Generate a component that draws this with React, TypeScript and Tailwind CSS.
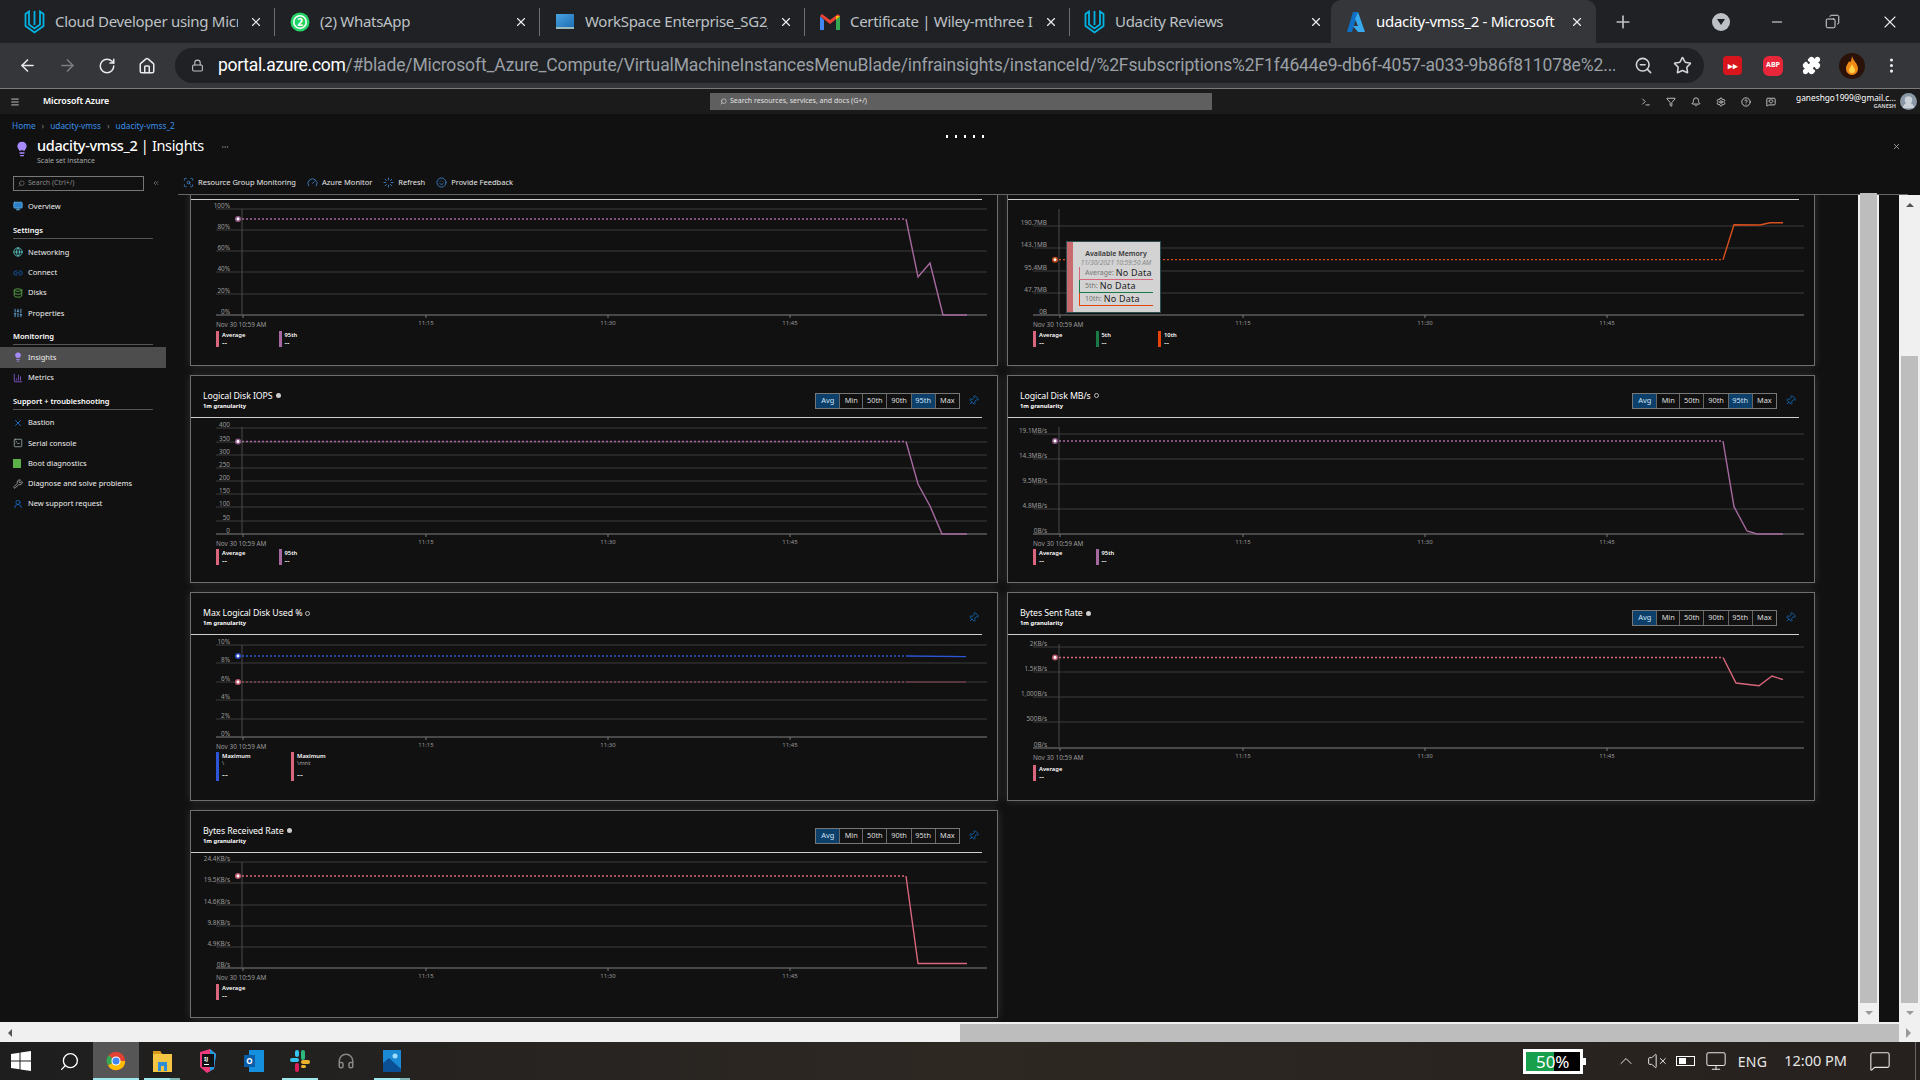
import React from "react";
import {
  ArrowLeft, ArrowRight, RotateCw, Home, Lock, ZoomOut, Star, Puzzle, EllipsisVertical, Minus, X, Plus, Copy, Search,
  Terminal, Filter, Bell, Settings, CircleHelp, MessageSquareHeart, Menu, ChevronUp, VolumeX, Monitor, MessageSquare,
  Globe, Link2, Database, SlidersVertical, Lightbulb, ChartColumn, SquareTerminal, Wrench, UserRound, Pin, ScanSearch, Gauge, Smile, Loader, ChevronsLeft, Ellipsis,
  Headphones,
} from "lucide-react";

const PINK = "#d9667c";
const PURPLE = "#a6699f";
const BLUE = "#2d55d8";
const ORANGE = "#d9501c";
const GREEN = "#1a7a46";
const FIERY = "#e8430a";

function Udacity() {
  return (
    <svg width="21" height="24" viewBox="0 0 21 24" fill="none" stroke="#02b3e4" strokeWidth="1.8">
      <path d="M5 1.5 1.5 4v12l9 6.5 9-6.5V4L16 1.5v13l-5.5 4-5.5-4z" />
      <path d="M10.5 1v14" />
    </svg>
  );
}
function WhatsApp() {
  return (
    <svg width="20" height="22" viewBox="0 0 20 22">
      <circle cx="10" cy="11" r="9.5" fill="#25d366" />
      <circle cx="10" cy="11" r="7" fill="#fff" />
      <circle cx="10" cy="11" r="5.5" fill="#25d366" />
      <text x="10" y="14.5" textAnchor="middle" fontSize="10" fontWeight="700" fill="#fff">2</text>
    </svg>
  );
}
function Workspace() {
  return <span className="w-[18px] h-[15px] bg-gradient-to-br from-[#4aa3df] to-[#1c6fb5] border-b-2 border-[#9bb] block" />;
}
function Gmail() {
  return (
    <svg width="20" height="16" viewBox="0 0 20 16">
      <path d="M0 2v14h4V6z" fill="#4285f4" />
      <path d="M20 2v14h-4V6z" fill="#34a853" />
      <path d="M0 2l10 8 10-8-2-2-8 6-8-6z" fill="#ea4335" />
      <path d="M16 2l4 0-4 4z" fill="#fbbc04" />
    </svg>
  );
}
function AzureA() {
  return (
    <svg width="18" height="20" viewBox="0 0 18 20">
      <path d="M6 0h5L5 20H0z" fill="#0f6fc4" />
      <path d="M11 0l7 20h-7L6 14h5L8 7z" fill="#38a9ee" />
    </svg>
  );
}

function Tab({ icon, title, active, sep, narrow }: { icon: React.ReactNode; title: string; active?: boolean; sep?: boolean; narrow?: boolean }) {
  return (
    <div className={`${narrow ? "w-[261px]" : "w-[265px]"} h-[43px] shrink-0 flex items-center pl-[14px] relative ${active ? "bg-[#35363a] rounded-t-[10px] text-white" : "text-[#bdc1c6]"}`}>
      <span className="w-[21px] flex justify-center shrink-0">{icon}</span>
      <span className="ml-[10px] w-[183px] overflow-hidden whitespace-nowrap text-[15px] tracking-[-0.3px]">{title}</span>
      <X size={14} className="ml-[11px] text-[#e8eaed]" />
      {sep && <span className="ml-auto w-px h-[28px] bg-[#6b6e72]" />}
    </div>
  );
}

function TopTabs() {
  return (
    <div className="h-[43px] bg-[#202124] flex items-center pl-[10px]">
      <Tab icon={<Udacity />} title="Cloud Developer using Micr" sep />
      <Tab icon={<WhatsApp />} title="(2) WhatsApp" sep />
      <Tab icon={<Workspace />} title="WorkSpace Enterprise_SG2_" sep />
      <Tab icon={<Gmail />} title="Certificate | Wiley-mthree In" sep />
      <Tab icon={<Udacity />} title="Udacity Reviews" narrow />
      <Tab icon={<AzureA />} title="udacity-vmss_2 - Microsoft" active />
      <Plus size={20} className="text-[#bdc1c6] ml-[17px]" />
      <span className="ml-[79px] w-[18px] h-[18px] rounded-full bg-[#bdc1c6] flex items-center justify-center">
        <span className="w-0 h-0 border-x-[4px] border-x-transparent border-t-[6px] border-t-[#202124]" />
      </span>
      <Minus size={16} className="ml-[39px] text-[#e8eaed]" strokeWidth={1.5} />
      <Copy size={15} className="ml-[40px] text-[#e8eaed] -scale-x-100" strokeWidth={1.5} />
      <X size={20} className="ml-[40px] text-[#e8eaed]" strokeWidth={1.3} />
    </div>
  );
}

function Fire() {
  return (
    <svg width="26" height="26" viewBox="0 0 26 26">
      <circle cx="13" cy="13" r="13" fill="#2a1208" />
      <path d="M13 3c1 5 6 7 6 13a6 6 0 0 1-12 0c0-4 2-5 3-8 1 2 2 2 3-5z" fill="#f08a16" />
      <path d="M13 11c1 3 3 4 3 6a3 3 0 0 1-6 0c0-2 2-3 3-6z" fill="#ffd34a" />
    </svg>
  );
}

function BrowserBar() {
  return (
    <div className="h-[45px] bg-[#35363a] flex items-center pl-[18px] text-[#e8eaed]">
      <ArrowLeft size={19} />
      <ArrowRight size={19} className="ml-[21px] text-[#7b7e82]" />
      <RotateCw size={18} className="ml-[21px]" />
      <Home size={18} className="ml-[22px]" />
      <div className="ml-[19px] w-[1529px] h-[35px] rounded-full bg-[#202124] flex items-center pl-[16px]">
        <Lock size={13} className="text-[#bdc1c6]" />
        <span className="ml-[14px] w-[1397px] overflow-hidden whitespace-nowrap text-[17.5px] tracking-[-0.13px] font-['Roboto',sans-serif]">
          <span className="text-white tracking-[-0.3px]">portal.azure.com</span>
          <span className="text-[#9aa0a6]">/#blade/Microsoft_Azure_Compute/VirtualMachineInstancesMenuBlade/infrainsights/instanceId/%2Fsubscriptions%2F1f4644e9-db6f-4057-a033-9b86f811078e%2...</span>
        </span>
        <ZoomOut size={19} className="ml-[19px] text-[#d4d6d9]" />
        <Star size={19} className="ml-[20px] text-[#d4d6d9]" />
      </div>
      <span className="ml-[19px] w-[19px] h-[19px] rounded-[4px] bg-[#d8141c] flex items-center justify-center text-white text-[9px] font-bold">▸▸</span>
      <span className="ml-[21px] w-[20px] h-[20px] rounded-[6px] bg-[#e8263a] flex items-center justify-center text-white text-[7px] font-bold">ABP</span>
      <Puzzle size={19} className="ml-[19px] fill-white text-white" />
      <span className="ml-[18px] block h-[26px]"><Fire /></span>
      <EllipsisVertical size={19} className="ml-[17px]" />
    </div>
  );
}

function AzureBar() {
  return (
    <div className="h-[26px] bg-[#1b1b1b] border-t border-[#7a7a7a] flex items-center pl-[10px] relative text-[#ddd]">
      <Menu size={10} />
      <span className="ml-[22px] w-[668px] text-[8.8px] font-semibold tracking-[-0.1px] text-white pl-[1px]">Microsoft Azure</span>
      <div className="w-[502px] h-[17px] bg-[#5f5f5f] flex items-center pl-[10px] text-[7px] text-[#e2e2e2]">
        <Search size={7} className="mr-[3px] -scale-x-100" />Search resources, services, and docs (G+/)
      </div>
      <div className="ml-[429px] flex gap-[15px] items-center">
        <Terminal size={10} /><Filter size={10} /><Bell size={10} /><Settings size={10} /><CircleHelp size={10} /><MessageSquareHeart size={10} />
      </div>
      <div className="ml-[8px] w-[112px] text-right leading-[9px] pt-[1px]">
        <div className="text-[8.3px] whitespace-nowrap text-white">ganeshgo1999@gmail.c...</div>
        <div className="text-[5.5px] font-bold text-[#ccc]">GANESH</div>
      </div>
      <span className="ml-[4px] w-[17px] h-[17px] rounded-full bg-[#8a97a6] flex items-end justify-center overflow-hidden"><UserRound size={15} className="fill-[#c9d0d8] text-[#c9d0d8]" /></span>
    </div>
  );
}

function PageHead() {
  return (
    <div className="h-[56px] relative px-[12px] pt-[7px]">
      <div className="flex items-center text-[8.3px] leading-[10px] text-[#3a8fe8]">
        <span>Home</span><span className="text-[#888] mx-[6px]">›</span>
        <span>udacity-vmss</span><span className="text-[#888] mx-[6px]">›</span>
        <span>udacity-vmss_2</span>
      </div>
      <div className="flex items-start mt-[5px]">
        <Lightbulb size={16} className="ml-[2px] mt-[5px] text-[#a78bfa] fill-[#a78bfa]" />
        <div className="ml-[7px]">
          <div className="text-[14.5px] leading-[19px] text-white tracking-[-0.35px]">
            <span className="font-medium">udacity-vmss_2</span> <span>| Insights</span>
            <Ellipsis size={8} className="inline ml-[17px] text-[#888]" />
          </div>
          <div className="text-[7px] leading-[8px] text-[#aaa] mt-[2px]">Scale set instance</div>
        </div>
      </div>
      <div className="absolute left-[946px] top-[21px] flex gap-[7px]">
        {[0, 1, 2, 3, 4].map((i) => <span key={i} className="w-[2px] h-[3px] bg-white" />)}
      </div>
      <X size={9} className="absolute right-[19px] top-[28px] text-[#bbb]" />
    </div>
  );
}

type NavItem = { t: string; icon: React.ReactNode; active?: boolean };
function NavRow({ t, icon, active }: NavItem) {
  return (
    <div className={`h-[20.25px] flex items-center pl-[13px] text-[7.5px] text-[#eee] ${active ? "bg-[#4d4d4d]" : ""}`}>
      <span className="w-[15px] flex">{icon}</span>
      <span className="whitespace-nowrap">{t}</span>
    </div>
  );
}
function NavHead({ t, mt }: { t: string; mt: string }) {
  return (
    <div className={`${mt} mx-[13px] h-[16px] flex items-center border-b border-[#555] text-[7.5px] font-semibold text-white whitespace-nowrap`}>{t}</div>
  );
}

function Sidebar() {
  const s = 10;
  return (
    <div className="w-[166px] shrink-0 h-full">
      <div className="flex items-center pl-[13px] h-[24px] pt-[2px]">
        <div className="w-[131px] h-[15px] border border-[#777] flex items-center pl-[4px] text-[7px] text-[#888]">
          <Search size={7} className="mr-[3px] -scale-x-100" />Search (Ctrl+/)
        </div>
        <ChevronsLeft size={8} className="ml-[8px] text-[#888]" />
      </div>
      <div className="mt-[2px]">
        <NavRow t="Overview" icon={<Monitor size={s} className="text-[#5ab4f0] fill-[#2f7fc4]" />} />
      </div>
      <NavHead t="Settings" mt="mt-[7px]" />
      <div className="mt-[3px]">
        <NavRow t="Networking" icon={<Globe size={s} className="text-[#5cc6c6]" />} />
        <NavRow t="Connect" icon={<Link2 size={s} className="text-[#1565c0]" />} />
        <NavRow t="Disks" icon={<Database size={s} className="text-[#5fb04a]" />} />
        <NavRow t="Properties" icon={<SlidersVertical size={s} className="text-[#6fb8ee]" />} />
      </div>
      <NavHead t="Monitoring" mt="mt-[6px]" />
      <div className="mt-[2px]">
        <NavRow t="Insights" active icon={<Lightbulb size={s} className="text-[#a78bfa] fill-[#a78bfa]" />} />
        <NavRow t="Metrics" icon={<ChartColumn size={s} className="text-[#8c5ad8]" />} />
      </div>
      <NavHead t="Support + troubleshooting" mt="mt-[6px]" />
      <div className="mt-[3px]">
        <NavRow t="Bastion" icon={<X size={s} className="text-[#1f78d1]" />} />
        <NavRow t="Serial console" icon={<SquareTerminal size={s} className="text-[#9aa]" />} />
        <NavRow t="Boot diagnostics" icon={<span className="w-[8px] h-[9px] bg-[#5cb04a] block" />} />
        <NavRow t="Diagnose and solve problems" icon={<Wrench size={s} className="text-[#aaa]" />} />
        <NavRow t="New support request" icon={<UserRound size={s} className="text-[#1565c0]" />} />
      </div>
    </div>
  );
}

function ActionBar() {
  const item = "flex items-center text-[7.5px] text-[#e6e6e6] whitespace-nowrap";
  const ic = "text-[#3b7fc4] mr-[4px]";
  return (
    <div className="h-[25px] ml-[12px] w-[1730px] border-b border-[#666] flex items-center pl-[5px] pt-[1px] gap-[11px]">
      <span className={item}><ScanSearch size={11} className={ic} />Resource Group Monitoring</span>
      <span className={item}><Gauge size={11} className={ic} />Azure Monitor</span>
      <span className={item}><Loader size={11} className={ic} />Refresh</span>
      <span className={item}><Smile size={11} className={ic} />Provide Feedback</span>
    </div>
  );
}

type Line = { color: string; y: number; pts: number[][]; thin?: boolean };
type ChartP = {
  title: string; dot?: "fill" | "ring"; buttons?: string[]; grid: [string, number][]; axis: number; top?: number; h: number;
  lines: Line[]; legend: { c: string; t: string; sub?: string }[]; legendW?: number; tip?: boolean; tall?: boolean;
};

function Chart({ grid, axis, top, h, lines }: ChartP) {
  return (
    <svg width="806" height={h} viewBox={`1 43 806 ${h}`} className="block">
      {grid.map(([l, y], i) => (
        <g key={i}>
          <line x1="26" x2="797" y1={y} y2={y} stroke="#3d3d3d" strokeWidth="1" />
          <text x="40" y={y - 1} textAnchor="end" fontSize="6.4" fill="#9a9a9a">{l}</text>
        </g>
      ))}
      <line x1="26" x2="797" y1={axis} y2={axis} stroke="#6a6a6a" strokeWidth="1" />
      <line x1="52" x2="52" y1={top ?? 52} y2={axis} stroke="#4a4a4a" strokeWidth="1" />
      {[53, 236, 418, 600].map((x) => <line key={x} x1={x} x2={x} y1={axis} y2={axis + 3} stroke="#777" />)}
      <text x="26" y={axis + 12} fontSize="6.4" fill="#9a9a9a">Nov 30 10:59 AM</text>
      {[["11:15", 236], ["11:30", 418], ["11:45", 600]].map(([t, x]) => (
        <text key={t as string} x={x as number} y={axis + 10} textAnchor="middle" fontSize="6" fill="#9a9a9a">{t}</text>
      ))}
      {lines.map((l, i) => (
        <g key={i}>
          <line x1="48" x2="716" y1={l.y} y2={l.y} stroke={l.color} strokeWidth={l.thin ? 1 : 1.3} strokeDasharray="2 2" opacity={l.thin ? 0.8 : 1} />
          <polyline points={[[716, l.y], ...l.pts].map((p) => p.join(",")).join(" ")} fill="none" stroke={l.color} strokeWidth={l.thin ? 0.8 : 1.4} opacity={l.thin ? 0.7 : 1} />
          <circle cx="48" cy={l.y} r="3" fill={l.color} opacity="0.85" />
          <circle cx="48" cy={l.y} r="1.4" fill="#fff" />
        </g>
      ))}
    </svg>
  );
}

function Tooltip() {
  const rows: [string, string][] = [["Average:", PINK], ["5th:", GREEN], ["10th:", FIERY]];
  return (
    <div className="absolute left-[58px] top-[83px] w-[95px] h-[72px] bg-[#d3d3d3] border border-[#2f5050] flex">
      <span className="w-[6px] h-full bg-[#c96a6e] shrink-0" />
      <div className="pl-[6px] pt-[7px] w-[80px]">
        <div className="text-[7px] leading-[9px] font-semibold text-[#333] text-center whitespace-nowrap">Available Memory</div>
        <div className="text-[6.5px] leading-[9px] italic text-[#8a8a8a] text-center whitespace-nowrap">11/30/2021 10:59:50 AM</div>
        {rows.map(([k, c]) => (
          <div key={k} className="h-[13px] flex items-end pl-[5px] border-l border-b whitespace-nowrap" style={{ borderColor: c }}>
            <span className="text-[7px] leading-[12px] text-[#777]">{k}</span>
            <span className="ml-[2px] text-[9px] leading-[12px] text-[#222] tracking-[0.2px]">No Data</span>
          </div>
        ))}
      </div>
    </div>
  );
}

function Card(p: ChartP) {
  return (
    <div className="w-[808px] h-[208.5px] bg-[#111] border border-[#6e6e6e] relative shadow-[0_0_9px_rgba(255,255,255,0.13)]">
      <div className="w-[791px] h-[42px] border-b border-[#cfcfcf] flex justify-between pl-[12px] pr-[2px]">
        <div className="pt-[14px]">
          <div className="text-[8.8px] leading-[12px] text-white flex items-center whitespace-nowrap tracking-[-0.1px]">
            {p.title}
            {p.dot === "ring" && <span className="ml-[3px] w-[5px] h-[5px] rounded-full border border-[#bbb]" />}
            {p.dot !== "ring" && <span className="ml-[3px] w-[5px] h-[5px] rounded-full bg-[#ccc]" />}
          </div>
          <div className="text-[5.8px] leading-[8px] font-bold text-white whitespace-nowrap">1m granularity</div>
        </div>
        <div className="pt-[17px] flex items-start">
          {p.buttons && (
            <div className="flex h-[16px] border border-[#777]">
              {["Avg", "Min", "50th", "90th", "95th", "Max"].map((b, i) => (
                <span key={b} className={`${i < 2 ? "w-[23px]" : "w-[24.2px]"} flex items-center justify-center text-[7.4px] ${i > 0 ? "border-l border-[#666]" : ""} ${p.buttons!.includes(b) ? "bg-[#0d3f6b] text-[#cfe3f5]" : "text-[#ddd]"}`}>{b}</span>
              ))}
            </div>
          )}
          <Pin size={11} className="ml-[8px] mt-[2px] mr-[1px] text-[#1565b0] rotate-45" />
        </div>
      </div>
      <Chart {...p} />
      <div className="flex pl-[25px]">
        {p.legend.map((l) => (
          <div key={l.t + (l.sub ?? "")} className="flex shrink-0" style={{ width: p.legendW ?? 62.5 }}>
            <span className={`w-[3px] ${p.tall ? "h-[29px]" : "h-[16px]"}`} style={{ background: l.c }} />
            <div className="ml-[3px] text-[5.8px] leading-[7px] text-white font-semibold whitespace-nowrap">
              <div className="pt-[1px]">{l.t}</div>
              {l.sub && <div className="text-[#aaa] font-normal">{l.sub}</div>}
              <div className={p.tall ? "pt-[4px] text-[9px] font-normal" : "text-[8px] leading-[8px] font-normal"}>--</div>
            </div>
          </div>
        ))}
      </div>
      {p.tip && <Tooltip />}
    </div>
  );
}

const AVG = { c: PINK, t: "Average" };
const P95 = { c: PURPLE, t: "95th" };
const cards: ChartP[] = [
  { title: "CPU Utilization %", grid: [["100%", 52], ["80%", 73], ["60%", 94], ["40%", 115], ["20%", 137], ["0%", 158]], axis: 158, h: 131,
    lines: [{ color: PURPLE, y: 62, pts: [[728, 120], [740, 106], [753, 158], [777, 158]] }], legend: [AVG, P95] },
  { title: "Available Memory", grid: [["190.7MB", 69], ["143.1MB", 91], ["95.4MB", 114], ["47.7MB", 136], ["0B", 158]], axis: 158, h: 131,
    lines: [{ color: ORANGE, y: 102.7, pts: [[727, 67.7], [753, 68], [763, 65.7], [776, 65.7]] }],
    legend: [AVG, { c: GREEN, t: "5th" }, { c: FIERY, t: "10th" }], tip: true },
  { title: "Logical Disk IOPS", buttons: ["Avg", "95th"], grid: [["400", 53], ["350", 67], ["300", 80], ["250", 93], ["200", 106], ["150", 119], ["100", 132], ["50", 146], ["0", 159]], axis: 159, h: 131,
    lines: [{ color: PURPLE, y: 66.5, pts: [[728, 109], [740, 131], [752, 159], [777, 159]] }], legend: [AVG, P95] },
  { title: "Logical Disk MB/s", dot: "ring", buttons: ["Avg", "95th"], grid: [["19.1MB/s", 59], ["14.3MB/s", 84], ["9.5MB/s", 109], ["4.8MB/s", 134], ["0B/s", 159]], axis: 159, h: 131,
    lines: [{ color: PURPLE, y: 66, pts: [[727, 131.7], [740, 156], [750, 159], [776, 159]] }], legend: [AVG, P95] },
  { title: "Max Logical Disk Used %", dot: "ring", grid: [["10%", 53], ["8%", 71], ["6%", 90], ["4%", 108], ["2%", 127], ["0%", 145]], axis: 145, top: 53, h: 117,
    lines: [{ color: BLUE, y: 64, pts: [[776, 64.6]] }, { color: PINK, y: 90, pts: [[776, 90]], thin: true }],
    legend: [{ c: BLUE, t: "Maximum", sub: "\\" }, { c: PINK, t: "Maximum", sub: "\\mnt" }], legendW: 75, tall: true },
  { title: "Bytes Sent Rate", buttons: ["Avg"], grid: [["2KB/s", 55], ["1.5KB/s", 80], ["1,000B/s", 105], ["500B/s", 130], ["0B/s", 156]], axis: 156, h: 130,
    lines: [{ color: PINK, y: 65.5, pts: [[729, 91], [752, 93.7], [765, 84], [776, 87.6]] }], legend: [AVG] },
  { title: "Bytes Received Rate", buttons: ["Avg"], grid: [["24.4KB/s", 52], ["19.5KB/s", 73], ["14.6KB/s", 95], ["9.8KB/s", 116], ["4.9KB/s", 137], ["0B/s", 158]], axis: 158, h: 131,
    lines: [{ color: PINK, y: 66, pts: [[728, 153.5], [777, 153.5]] }], legend: [AVG] },
];

function VScroll({ full }: { full?: boolean }) {
  return (
    <div className="w-[21px] shrink-0 h-full bg-[#f0f0f0] flex flex-col items-center">
      <span className="mt-[8px] w-0 h-0 border-x-[4px] border-x-transparent border-b-[4px] border-b-[#555]" />
      <span className={`w-[17px] bg-[#bdbdbd] flex-1 ${full ? "mt-[149px]" : "-mt-[14px]"}`} />
      <span className="mt-[8px] mb-[7px] w-0 h-0 border-x-[4px] border-x-transparent border-t-[4px] border-t-[#999]" />
    </div>
  );
}

function Content() {
  return (
    <div className="flex-1 flex flex-col min-w-0 h-full">
      <ActionBar />
      <div className="flex flex-1 min-h-0">
        <div className="w-[1692px] shrink-0 overflow-hidden pl-[24px]">
          <div className="-mt-[38px] grid grid-cols-[808px_808px] gap-[9px]">
            {cards.map((c) => <Card key={c.title} {...c} />)}
          </div>
        </div>
        <VScroll />
        <div className="w-[20px] shrink-0" />
        <VScroll full />
      </div>
    </div>
  );
}

function HScroll() {
  return (
    <div className="h-[20px] bg-[#f0f0f0] flex items-center pt-[2px]">
      <span className="ml-[8px] w-0 h-0 border-y-[4px] border-y-transparent border-r-[4px] border-r-[#555]" />
      <span className="ml-[948px] w-[939px] h-[18px] bg-[#bdbdbd]" />
      <span className="ml-[7px] w-0 h-0 border-y-[5px] border-y-transparent border-l-[5px] border-l-[#999]" />
    </div>
  );
}

function Win() {
  return (
    <svg width="20" height="20" viewBox="0 0 20 20" fill="#fff">
      <path d="M0 3l8.5-1.2V9.5H0zM9.5 1.6 20 0v9.5H9.5zM0 10.5h8.5v7.7L0 17zM9.5 10.5H20V20L9.5 18.4z" />
    </svg>
  );
}
function Chrome() {
  return (
    <svg width="20" height="24" viewBox="0 0 24 24">
      <circle cx="12" cy="12" r="11" fill="#e34133" />
      <path d="M12 12 2.5 17.5A11 11 0 0 1 3 5z" fill="#34a853" />
      <path d="M12 12 2.5 17.5A11 11 0 0 0 23 12z" fill="#fbbc04" />
      <circle cx="12" cy="12" r="5.5" fill="#fff" />
      <circle cx="12" cy="12" r="4.2" fill="#4285f4" />
    </svg>
  );
}
function Folder() {
  return (
    <svg width="19" height="21" viewBox="0 0 19 21">
      <path d="M0 0h7l2 3h10v18H0z" fill="#f4c542" />
      <path d="M0 0h7l2 3H0z" fill="#d79a18" />
      <path d="M5 11h9v9h-3v-5H8v5H5z" fill="#2b8ed6" />
    </svg>
  );
}
function Intellij() {
  return (
    <svg width="20" height="24" viewBox="0 0 20 24">
      <path d="M2 3 12 0l6 5-2 15-7 4-7-6z" fill="#ec3a7a" />
      <path d="M12 0l6 5-2 15-4 2z" fill="#1c9de0" />
      <rect x="4" y="5" width="12" height="13" fill="#111" />
      <text x="6" y="12" fontSize="6" fill="#fff" fontWeight="700">IJ</text>
      <rect x="6" y="15" width="5" height="1" fill="#fff" />
    </svg>
  );
}
function Outlook() {
  return (
    <svg width="20" height="22" viewBox="0 0 20 22">
      <rect x="5" y="0" width="15" height="22" fill="#1490df" />
      <rect x="0" y="5" width="11" height="12" fill="#0a5da8" />
      <text x="5.5" y="14" fontSize="8" fill="#fff" textAnchor="middle" fontWeight="700">O</text>
    </svg>
  );
}
function Slack() {
  return (
    <svg width="20" height="22" viewBox="0 0 20 22">
      <rect x="0" y="8" width="9" height="4" rx="2" fill="#36c5f0" />
      <rect x="5" y="0" width="4" height="7" rx="2" fill="#36c5f0" />
      <rect x="11" y="0" width="4" height="10" rx="2" fill="#2eb67d" />
      <rect x="11" y="10" width="9" height="4" rx="2" fill="#ecb22e" />
      <rect x="5" y="13" width="4" height="9" rx="2" fill="#e01e5a" />
      <rect x="11" y="15" width="5" height="3" rx="1.5" fill="#ecb22e" />
    </svg>
  );
}
function Photos() {
  return (
    <svg width="18" height="22" viewBox="0 0 18 22">
      <rect width="18" height="22" fill="#1a8ad4" />
      <path d="M0 22V13l6-5 12 11v3z" fill="#0b4f94" />
      <circle cx="12" cy="6" r="2.5" fill="#9fdcff" />
    </svg>
  );
}

function TBIcon({ children, bar, split, bg }: { children: React.ReactNode; bar?: number; split?: boolean; bg?: boolean }) {
  return (
    <div className={`w-[46px] h-[38px] relative flex items-center justify-center shrink-0 ${bg ? "bg-[#565656]" : ""}`}>
      {children}
      {bar && (
        <span className="absolute bottom-0 left-0 right-0 mx-auto h-[2px] flex" style={{ width: bar }}>
          <span className="flex-1 bg-[#9fe8ee]" />
          {split && <span className="w-[10px] bg-[#7fb5b2]" />}
        </span>
      )}
    </div>
  );
}

function Taskbar() {
  return (
    <div className="h-[38px] bg-gradient-to-r from-[#1e1e1e] via-[#2e2823] to-[#26211e] flex items-center text-[#e6e6e6]">
      <div className="w-[46px] flex items-center pl-[11px]"><Win /></div>
      <div className="w-[47px] flex items-center justify-center"><Search size={21} className="-scale-x-100 text-white" strokeWidth={1.5} /></div>
      <TBIcon bar={46} bg><Chrome /></TBIcon>
      <TBIcon bar={36} split><Folder /></TBIcon>
      <TBIcon><Intellij /></TBIcon>
      <TBIcon><Outlook /></TBIcon>
      <TBIcon bar={36}><Slack /></TBIcon>
      <TBIcon><Headphones size={18} className="text-[#888]" /></TBIcon>
      <TBIcon bar={36} split><Photos /></TBIcon>
      <div className="ml-auto flex items-center">
        <div className="w-[60px] h-[25px] border-[3px] border-white bg-black relative flex items-center justify-center overflow-visible">
          <span className="absolute left-0 top-0 bottom-0 w-[28px] bg-[#18a04c]" />
          <span className="relative text-[17px] text-white leading-none">50%</span>
          <span className="absolute -right-[6px] top-[6px] w-[3px] h-[7px] bg-white" />
        </div>
        <ChevronUp size={20} className="ml-[33px]" strokeWidth={1.2} />
        <VolumeX size={20} className="ml-[11px]" strokeWidth={1.2} />
        <span className="ml-[9px] w-[19px] h-[10px] border border-white flex items-center pl-[2px]"><span className="w-[7px] h-[6px] bg-white" /></span>
        <Monitor size={22} className="ml-[10px]" strokeWidth={1.1} />
        <span className="ml-[11px] text-[14px] tracking-[0.3px]">ENG</span>
        <span className="ml-[17px] text-[14.5px] whitespace-nowrap">12:00 PM</span>
        <MessageSquare size={22} className="ml-[22px]" strokeWidth={1.2} />
        <span className="ml-[24px] w-px h-[38px] bg-[#666]" />
        <span className="w-[4px]" />
      </div>
    </div>
  );
}

export default function App() {
  return (
    <div className="w-[1920px] h-[1080px] overflow-hidden flex flex-col bg-[#111] font-['Noto_Sans',sans-serif]">
      <TopTabs />
      <BrowserBar />
      <AzureBar />
      <PageHead />
      <div className="flex h-[852px]">
        <Sidebar />
        <Content />
      </div>
      <HScroll />
      <Taskbar />
    </div>
  );
}
